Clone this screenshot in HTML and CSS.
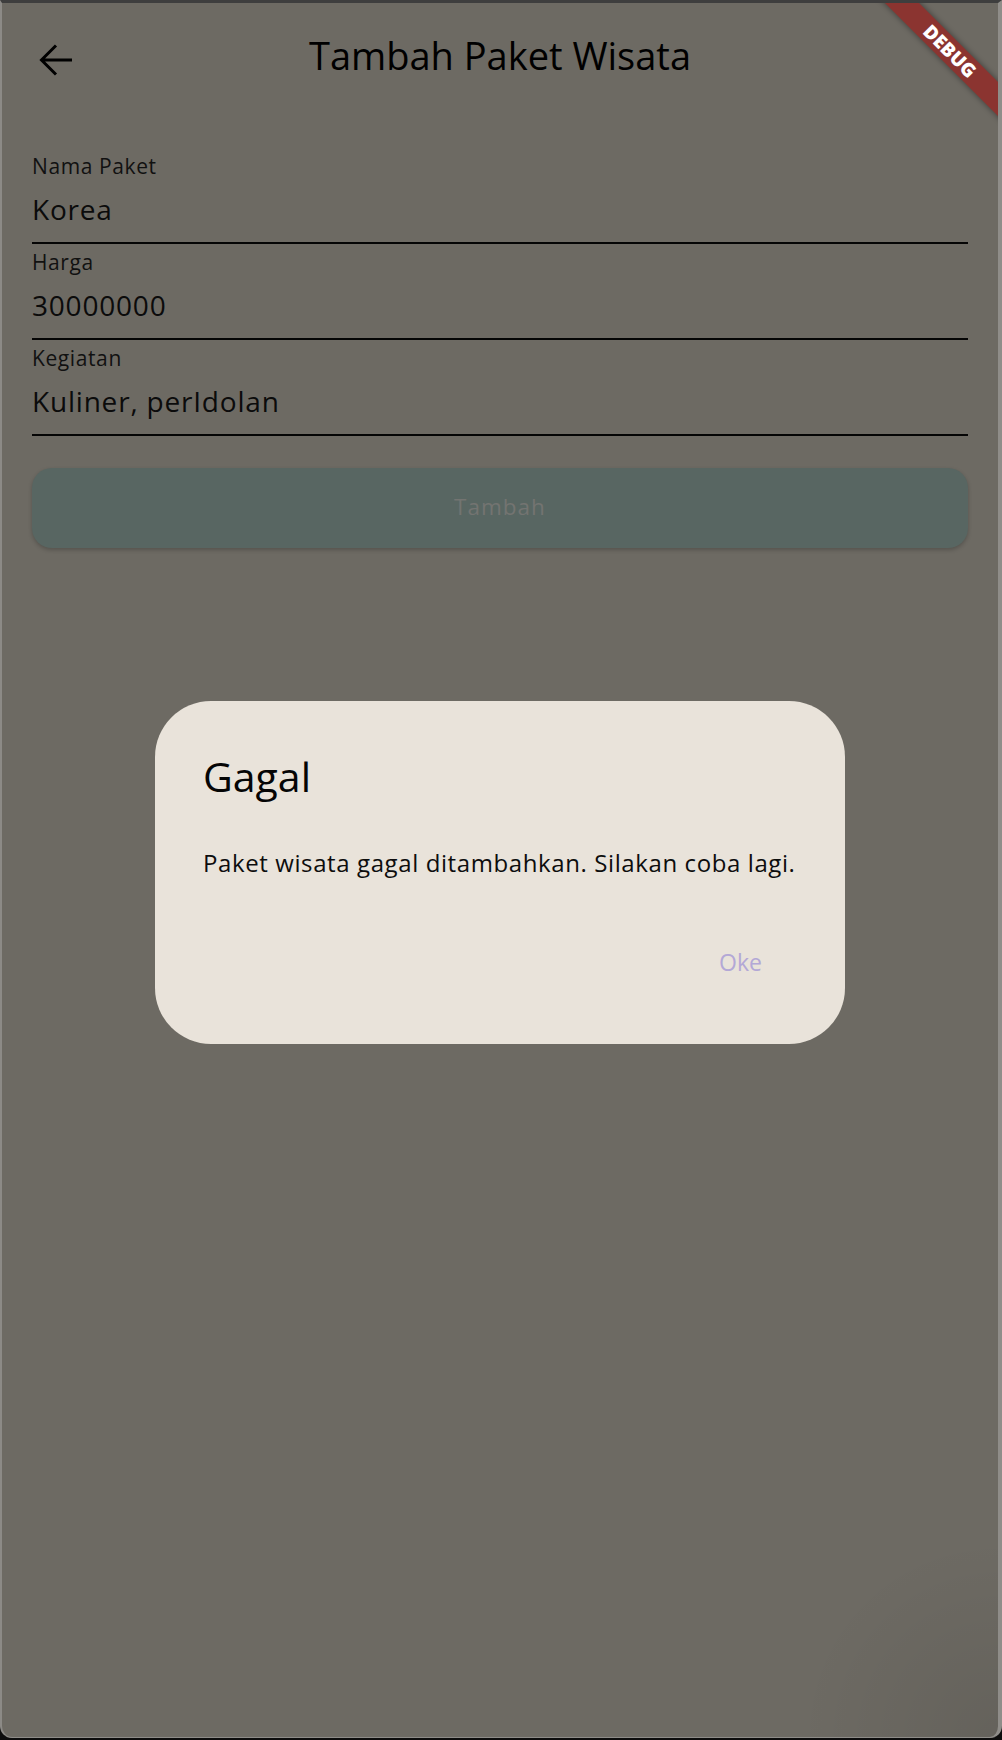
FILE: index.html
```html
<!DOCTYPE html>
<html lang="id">
<head>
<meta charset="utf-8">
<title>Tambah Paket Wisata</title>
<link rel="stylesheet" href="styles.css">
</head>
<body>
<div class="frame">
  <header class="appbar">
    <svg class="back" width="36" height="34" viewBox="0 0 36 34" aria-label="Kembali">
      <path d="M3.5 17 H34 M18 2.5 L3.5 17 L18 31.5" fill="none" stroke="#000" stroke-width="3"/>
    </svg>
    <h1 class="title">Tambah Paket Wisata</h1>
    <span class="spacer"></span>
  </header>

  <main class="form">
    <div class="field">
      <div class="label">Nama Paket</div>
      <div class="value">Korea</div>
    </div>
    <div class="field">
      <div class="label">Harga</div>
      <div class="value">30000000</div>
    </div>
    <div class="field">
      <div class="label">Kegiatan</div>
      <div class="value">Kuliner, perIdolan</div>
    </div>
    <div class="button">Tambah</div>
  </main>

  <div class="barrier">
    <div class="dialog">
      <h2 class="dialog-title">Gagal</h2>
      <p class="dialog-body">Paket wisata gagal ditambahkan. Silakan coba lagi.</p>
      <div class="actions"><span class="ok">Oke</span></div>
    </div>
  </div>

  <div class="debug">DEBUG</div>
</div>
</body>
</html>
```

FILE: styles.css
```css
html, body {
  margin: 0;
  padding: 0;
  background: #0d0d0d;
}

body {
  font-family: "Open Sans", "Noto Sans", sans-serif;
  color: #0b0b0b;
}

.frame {
  position: relative;
  box-sizing: border-box;
  width: 1002px;
  height: 1738px;
  overflow: hidden;
  background:
    radial-gradient(circle at 100% 100%, rgba(0, 0, 0, 0.08), rgba(0, 0, 0, 0) 200px),
    #6d6a63;
  border-top: 3px solid #3e3e3e;
  border-left: 2px solid #8c8a86;
  border-right: 4px solid #8f8d89;
  border-bottom: 1px solid #8e8c88;
  border-radius: 0 0 12px 12px;
}

/* App bar */
.appbar {
  box-sizing: border-box;
  height: 112px;
  display: grid;
  grid-template-columns: 1fr auto 1fr;
  align-items: start;
}

.back {
  display: block;
  margin: 40px 0 0 36px;
}

.title {
  margin: 26px 0 0;
  font-size: 38px;
  line-height: 52px;
  font-weight: 400;
  color: #000;
  white-space: nowrap;
}

/* Form */
.form {
  padding: 33px 30px 0;
}

.field {
  padding-top: 6px;
  border-bottom: 2px solid #050505;
}

.label {
  font-size: 21px;
  line-height: 24px;
  letter-spacing: 0.6px;
  color: #111;
}

.value {
  margin-top: 12px;
  padding-bottom: 14px;
  font-size: 28px;
  line-height: 38px;
  letter-spacing: 0.8px;
  color: #0b0b0b;
}

.button {
  box-sizing: border-box;
  margin-top: 32px;
  height: 80px;
  padding-bottom: 4px;
  border-radius: 20px;
  background: #586662;
  box-shadow: 0 2px 4px rgba(0, 0, 0, 0.22);
  display: flex;
  align-items: center;
  justify-content: center;
  font-size: 22.5px;
  letter-spacing: 1px;
  color: #737471;
}

/* Dialog */
.barrier {
  position: absolute;
  inset: 0;
  display: flex;
  align-items: center;
  justify-content: center;
  padding-top: 4px;
}

.dialog {
  box-sizing: border-box;
  width: 690px;
  height: 343px;
  padding: 47px 48px 0;
  border-radius: 56px;
  background: #e9e3da;
}

.dialog-title {
  margin: 0;
  font-size: 41px;
  line-height: 56px;
  font-weight: 400;
  color: #050505;
}

.dialog-body {
  margin: 43px 0 0;
  font-size: 24px;
  line-height: 32px;
  letter-spacing: 0.6px;
  color: #0d0d0d;
  white-space: nowrap;
}

.actions {
  margin-top: 67px;
  display: flex;
  justify-content: flex-end;
  padding-right: 35px;
}

.ok {
  font-size: 23px;
  line-height: 32px;
  color: #b3a8d6;
}

/* Debug banner */
.debug {
  position: absolute;
  top: 36px;
  right: -52px;
  width: 200px;
  height: 24px;
  transform: rotate(45deg);
  background: #8b3430;
  box-shadow: 0 0 6px rgba(0, 0, 0, 0.45);
  color: #fff;
  font-family: "Open Sans", sans-serif;
  font-weight: 800;
  font-size: 19px;
  line-height: 24px;
  text-align: center;
  letter-spacing: 0;
}
```
